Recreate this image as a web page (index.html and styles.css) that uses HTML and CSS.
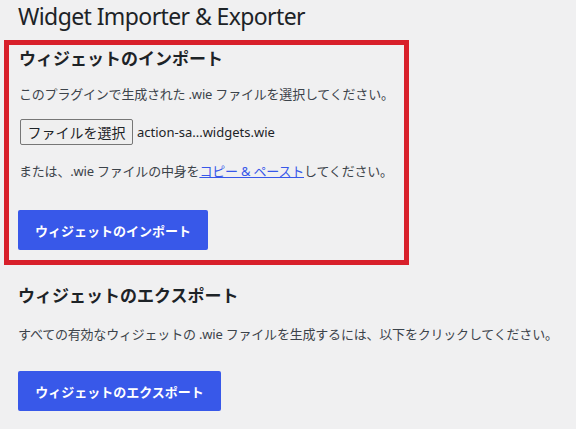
FILE: index.html
```html
<!DOCTYPE html>
<html lang="ja">
<head>
<meta charset="utf-8">
<title>Widget Importer &amp; Exporter</title>
<link rel="stylesheet" href="styles.css">
</head>
<body>
<div class="wrap">
  <h1 class="page-title">Widget Importer &amp; Exporter</h1>
  <section class="import-box">
    <h2 class="section-title">ウィジェットのインポート</h2>
    <p class="desc first">このプラグインで生成された .wie ファイルを選択してください。</p>
    <div class="file-row">
      <span class="file-btn">ファイルを選択</span>
      <span class="file-name">action-sa...widgets.wie</span>
    </div>
    <p class="desc second">または、.wie ファイルの中身を<a href="#" class="link">コピー &amp; ペースト</a>してください。</p>
    <button class="primary-btn import-btn">ウィジェットのインポート</button>
  </section>
  <section class="export-section">
    <h2 class="section-title">ウィジェットのエクスポート</h2>
    <p class="desc third">すべての有効なウィジェットの .wie ファイルを生成するには、以下をクリックしてください。</p>
    <button class="primary-btn export-btn">ウィジェットのエクスポート</button>
  </section>
</div>
</body>
</html>
```
FILE: styles.css
```css
html, body {
  margin: 0;
  padding: 0;
  background: #f0f0f1;
}
body {
  font-family: "Noto Sans", "Noto Sans CJK JP", sans-serif;
  color: #3c434a;
  font-size: 13px;
}
.wrap {
  padding: 0 0 0 18px;
}
.page-title {
  margin: 0;
  padding-top: 2px;
  height: 38px;
  font-size: 23px;
  line-height: 29px;
  font-weight: 400;
  letter-spacing: -0.6px;
  color: #1d2327;
}
.import-box {
  margin-left: -14px;
  width: 405px;
  box-sizing: border-box;
  border: 5px solid #d8202b;
  padding: 2px 10px 10px 10px;
}
.section-title {
  margin: 0;
  font-size: 17px;
  line-height: 24px;
  font-weight: 700;
  color: #1d2327;
}
.desc {
  margin: 0;
  line-height: 20px;
  font-size: 13px;
  white-space: nowrap;
  letter-spacing: -0.2px;
}
.desc.first { margin-top: 13px; }
.file-row {
  margin-top: 15px;
  display: flex;
  align-items: center;
  gap: 4px;
}
.file-btn {
  display: inline-flex;
  align-items: center;
  justify-content: center;
  box-sizing: border-box;
  width: 113px;
  height: 26px;
  margin-left: 1px;
  background: #efefef;
  border: 1px solid #767676;
  border-radius: 2px;
  color: #1d2327;
  font-size: 14px;
}
.file-name {
  color: #1d2327;
  font-size: 13px;
}
.desc.second { margin-top: 16px; }
.link {
  color: #3858e9;
  text-decoration: underline;
}
.primary-btn {
  display: block;
  height: 40px;
  border: none;
  border-radius: 2px;
  background: #3858e9;
  color: #fff;
  font-family: "Noto Sans", "Noto Sans CJK JP", sans-serif;
  font-size: 13px;
  font-weight: 700;
  padding: 0;
  cursor: pointer;
}
.import-btn {
  margin-top: 29px;
  width: 190px;
  margin-left: -1px;
}
.export-section {
  padding-top: 19px;
}
.desc.third { margin-top: 16px; }
.export-btn {
  margin-top: 27px;
  width: 203px;
}
```
